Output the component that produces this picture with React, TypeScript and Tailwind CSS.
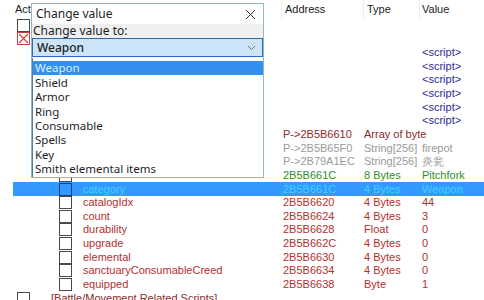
import React from 'react';

type Row = {
  level: 0 | 1;
  desc: string;
  address?: string;
  type?: string;
  value?: string;
  color: string;
  box?: 'plain' | 'cross';
  selected?: boolean;
};

const red = 'text-[#b3302f]';
// rows under the dialog keep their boxes but no visible label
const scriptRows: Row[] = [0, 1, 2, 3, 4, 5].map(() => ({ level: 1, desc: '', value: '<script>', color: 'text-[#2b2b9a]' }));

const rows: Row[] = [
  { level: 0, desc: '', color: 'text-black', box: 'plain' },
  { level: 0, desc: '', color: 'text-black', box: 'cross' },
  ...scriptRows,
  { level: 1, desc: '', address: 'P->2B5B6610', type: 'Array of byte', color: 'text-[#8b2a2a]' },
  { level: 1, desc: '', address: 'P->2B5B65F0', type: 'String[256]', value: 'firepot', color: 'text-[#9a9a9a]' },
  { level: 1, desc: '', address: 'P->2B79A1EC', type: 'String[256]', value: '炎瓮', color: 'text-[#9a9a9a]' },
  { level: 1, desc: '', address: '2B5B661C', type: '8 Bytes', value: 'Pitchfork', color: 'text-[#2f8a3a]' },
  { level: 1, desc: 'category', address: '2B5B661C', type: '4 Bytes', value: 'Weapon', color: 'text-[#3fd0ff]', selected: true },
  { level: 1, desc: 'catalogIdx', address: '2B5B6620', type: '4 Bytes', value: '44', color: red },
  { level: 1, desc: 'count', address: '2B5B6624', type: '4 Bytes', value: '3', color: red },
  { level: 1, desc: 'durability', address: '2B5B6628', type: 'Float', value: '0', color: red },
  { level: 1, desc: 'upgrade', address: '2B5B662C', type: '4 Bytes', value: '0', color: red },
  { level: 1, desc: 'elemental', address: '2B5B6630', type: '4 Bytes', value: '0', color: red },
  { level: 1, desc: 'sanctuaryConsumableCreed', address: '2B5B6634', type: '4 Bytes', value: '0', color: red },
  { level: 1, desc: 'equipped', address: '2B5B6638', type: 'Byte', value: '1', color: red },
  { level: 0, desc: '[Battle/Movement Related Scripts]', color: 'text-[#8b2a2a]' },
];

const options = ['Weapon', 'Shield', 'Armor', 'Ring', 'Consumable', 'Spells', 'Key', 'Smith elemental items'];

function CheckBox({ cross, selected }: { cross?: boolean; selected?: boolean }) {
  if (cross) {
    return (
      <svg width="13" height="13" viewBox="0 0 13 13" className="shrink-0">
        <rect x="0.5" y="0.5" width="12" height="12" fill="white" stroke="#c84040" />
        <path d="M2 2 L11 11 M11 2 L2 11" stroke="#c84040" strokeWidth="1.1" />
      </svg>
    );
  }
  return (
    <div
      className={`w-[13px] h-[13px] shrink-0 border ${selected ? 'border-[#1c3f6e] bg-[#3399ff]' : 'border-[#4a4a4a] bg-white'}`}
    />
  );
}

function TableRow({ row }: { row: Row }) {
  return (
    <div className={`flex items-center h-[13.65px] ml-[13px] ${row.selected ? 'bg-[#3399ff]' : ''} ${row.color}`}>
      <div className={`flex items-center w-[269px] shrink-0 ${row.level === 0 ? 'pl-[4px]' : 'pl-[46px]'}`}>
        <CheckBox cross={row.box === 'cross'} selected={row.selected} />
        {row.desc && (
          <span className={`whitespace-nowrap ${row.level === 0 ? 'ml-[21px]' : 'ml-[11px]'}`}>{row.desc}</span>
        )}
      </div>
      <div className="w-[82px] shrink-0 pl-[1px] whitespace-nowrap">{row.address}</div>
      <div className="w-[58px] shrink-0 whitespace-nowrap">{row.type}</div>
      <div className="flex-1 whitespace-nowrap">{row.value}</div>
    </div>
  );
}

export default function App() {
  return (
    <div className="relative w-[484px] h-[300px] overflow-hidden bg-white text-[11px] leading-none font-['Liberation_Sans',Arial,sans-serif]">
      <div className="flex h-[18px] items-center text-[#222]">
        <div className="w-[282px] pl-[15px] border-r border-[#ececec] h-full flex items-center">
          <span className="w-[16px] overflow-hidden whitespace-nowrap">Act</span>
        </div>
        <div className="w-[82px] pl-[3px] border-r border-[#ececec] h-full flex items-center">Address</div>
        <div className="w-[56px] pl-[3px] border-r border-[#ececec] h-full flex items-center">Type</div>
        <div className="flex-1 pl-[2px] h-full flex items-center">Value</div>
      </div>
      <div className="mt-[0.5px]">
        {rows.map((r, i) => (
          <TableRow key={i} row={r} />
        ))}
      </div>

      <div className="absolute left-[31px] top-[3px] w-[233px] h-[175px] bg-white border border-[#94b6cb] flex flex-col font-['Noto_Sans',sans-serif] text-[#1e1e1e]">
        <div className="h-[20px] flex items-center justify-between pl-[4px] pr-[7px] text-[12px]">
          <span>Change value</span>
          <svg width="11" height="11" viewBox="0 0 11 11">
            <path d="M1 1 L10 10 M10 1 L1 10" stroke="#333" strokeWidth="1" />
          </svg>
        </div>
        <div className="h-[14px] bg-[#f0f0f0] flex items-center pl-[1px] text-[12px]">Change value to:</div>
        <div className="h-[19px] bg-[#cce4f7] border border-[#2f6fa8] flex items-center justify-between pl-[4px] pr-[6px] text-[12px] font-medium">
          <span>Weapon</span>
          <svg width="9" height="6" viewBox="0 0 9 6">
            <path d="M1 1 L4.5 4.5 L8 1" fill="none" stroke="#777" strokeWidth="1" />
          </svg>
        </div>
        <div className="flex-1 mt-[1px] border-l border-[#4d7fa5] pt-[3px] text-[11.5px]">
          {options.map((o, i) => (
            <div
              key={o}
              className={`h-[14.4px] flex items-center pl-[2px] ${i === 0 ? 'bg-[#3390f0] text-[#d6ecff]' : ''}`}
            >
              {o}
            </div>
          ))}
        </div>
      </div>
    </div>
  );
}
